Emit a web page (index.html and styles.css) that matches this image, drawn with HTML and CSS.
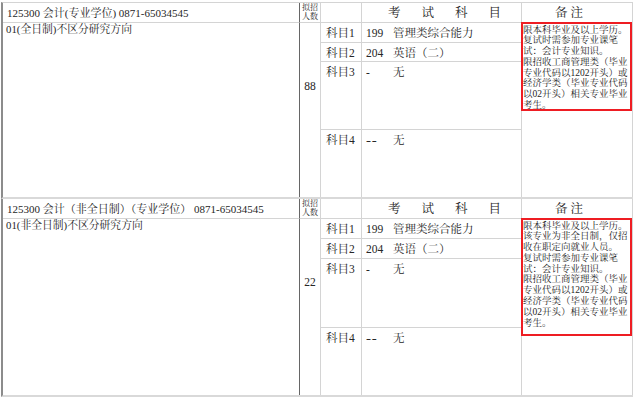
FILE: index.html
```html
<!DOCTYPE html>
<html lang="zh-CN">
<head>
<meta charset="utf-8">
<title>会计 招生目录</title>
<link rel="stylesheet" href="styles.css">
</head>
<body>
<div class="page">
  <section class="sec sec-1">
    <div class="cell c1 r1 major">125300 会计(专业学位) 0871-65034545</div>
    <div class="cell c2 r1 quota-head">拟招<br>人数</div>
    <div class="cell c3 r1 head"></div>
    <div class="cell c4 r1 head exam-head">考试科目</div>
    <div class="cell c5 r1 head note-head">备注</div>

    <div class="cell c1 rbody dir">01(全日制)不区分研究方向</div>
    <div class="cell c2 rbody num">88</div>

    <div class="cell c3 r2 lbl">科目1</div>
    <div class="cell c4 r2 subj"><span class="code">199</span>管理类综合能力</div>
    <div class="cell c3 r3 lbl">科目2</div>
    <div class="cell c4 r3 subj"><span class="code">204</span>英语（二）</div>
    <div class="cell c3 r4 lbl">科目3</div>
    <div class="cell c4 r4 subj"><span class="code">-</span>无</div>
    <div class="cell c3 r5 lbl last">科目4</div>
    <div class="cell c4 r5 subj last"><span class="code dash">--</span>无</div>

    <div class="cell c5 rbody remark">
      <div class="note note-1">
        <p class="note-text">限本科毕业及以上学历。<br>复试时需参加专业课笔<br>试：会计专业知识。<br>限招收工商管理类（毕业<br>专业代码以1202开头）或<br>经济学类（毕业专业代码<br>以02开头）相关专业毕业<br>考生。</p>
      </div>
    </div>
  </section>

  <section class="sec sec-2">
    <div class="cell c1 r1 major">125300 会计（非全日制）（专业学位） 0871-65034545</div>
    <div class="cell c2 r1 quota-head">拟招<br>人数</div>
    <div class="cell c3 r1 head"></div>
    <div class="cell c4 r1 head exam-head">考试科目</div>
    <div class="cell c5 r1 head note-head">备注</div>

    <div class="cell c1 rbody dir">01(非全日制)不区分研究方向</div>
    <div class="cell c2 rbody num">22</div>

    <div class="cell c3 r2 lbl">科目1</div>
    <div class="cell c4 r2 subj"><span class="code">199</span>管理类综合能力</div>
    <div class="cell c3 r3 lbl">科目2</div>
    <div class="cell c4 r3 subj"><span class="code">204</span>英语（二）</div>
    <div class="cell c3 r4 lbl">科目3</div>
    <div class="cell c4 r4 subj"><span class="code">-</span>无</div>
    <div class="cell c3 r5 lbl last">科目4</div>
    <div class="cell c4 r5 subj last"><span class="code dash">--</span>无</div>

    <div class="cell c5 rbody remark">
      <div class="note note-2">
        <p class="note-text">限本科毕业及以上学历。<br>该专业为非全日制，仅招<br>收在职定向就业人员。<br>复试时需参加专业课笔<br>试：会计专业知识。<br>限招收工商管理类（毕业<br>专业代码以1202开头）或<br>经济学类（毕业专业代码<br>以02开头）相关专业毕业<br>考生。</p>
      </div>
    </div>
  </section>
</div>
</body>
</html>
```

FILE: styles.css
```css
* { box-sizing: border-box; }

html, body {
  margin: 0;
  padding: 0;
  background: #ffffff;
}

body {
  font-family: "Liberation Serif", "Noto Serif CJK SC", "Noto Sans CJK SC", serif;
  color: #262626;
  font-size: 11px;
}

.page {
  padding: 2px 0 0 1px;
  width: 640px;
}

.sec {
  display: grid;
  grid-template-columns: 297px 21px 41px 160px 111px;
  width: 632px;
  border-left: 2px solid #8c8c8c;
  border-bottom: 2px solid #d9d9d9;
}

.sec-1 {
  grid-template-rows: 20px 20px 19px 68px 67px;
  border-top: 1px solid #d4d4d4;
}

.sec-2 {
  grid-template-rows: 20px 20px 20px 69px 67px;
}

.cell {
  border-right: 1px solid #d4d4d4;
  overflow: visible;
}

.c1 { grid-column: 1; border-right-color: #666666; }
.c2 { grid-column: 2; }
.c3 { grid-column: 3; }
.c4 { grid-column: 4; }
.c5 { grid-column: 5; }

.r1 { grid-row: 1; border-bottom: 1px solid #d4d4d4; }
.r2 { grid-row: 2; }
.r3 { grid-row: 3; }
.r4 { grid-row: 4; }
.r5 { grid-row: 5; }
.rbody { grid-row: 2 / 6; }

.major {
  font-size: 11px;
  line-height: 13px;
  padding: 4px 0 0 4px;
  white-space: nowrap;
}

.dir {
  font-size: 10.8px;
  line-height: 11px;
  padding: 1px 0 0 3px;
  white-space: nowrap;
}

.quota-head {
  font-size: 8px;
  line-height: 8.5px;
  padding: 1px 0 0 0;
  text-align: center;
  white-space: nowrap;
}

.head {
  font-size: 12.5px;
  line-height: 14px;
  padding-top: 3px;
  white-space: nowrap;
}

.exam-head {
  letter-spacing: 21px;
  padding-left: 26px;
}

.note-head {
  letter-spacing: 3px;
  padding-left: 33px;
}

.num {
  font-size: 11.5px;
  line-height: 13px;
  padding-top: 57px;
  text-align: center;
}

.lbl,
.subj {
  font-size: 11.5px;
  line-height: 13px;
  padding-top: 4px;
  white-space: nowrap;
  border-bottom: 1px solid #d4d4d4;
}

.lbl { padding-left: 5px; }
.subj { padding-left: 4px; }

.lbl.last,
.subj.last { border-bottom: none; }

.code {
  display: inline-block;
  width: 27px;
}

.dash {
  letter-spacing: 0.5px;
  transform: scaleX(1.3);
  transform-origin: left center;
}

.remark {
  position: relative;
}

.note {
  margin: -1px 0 0 -1px;
  width: 111px;
  border: 2px solid #ee1d23;
  background: #ffffff;
}

.note-1 { height: 89px; }
.note-2 { height: 118px; }

.note-text {
  margin: 0.5px 0 0 0;
  font-size: 9.5px;
  line-height: 10.8px;
  white-space: nowrap;
  color: #262626;
}
```
